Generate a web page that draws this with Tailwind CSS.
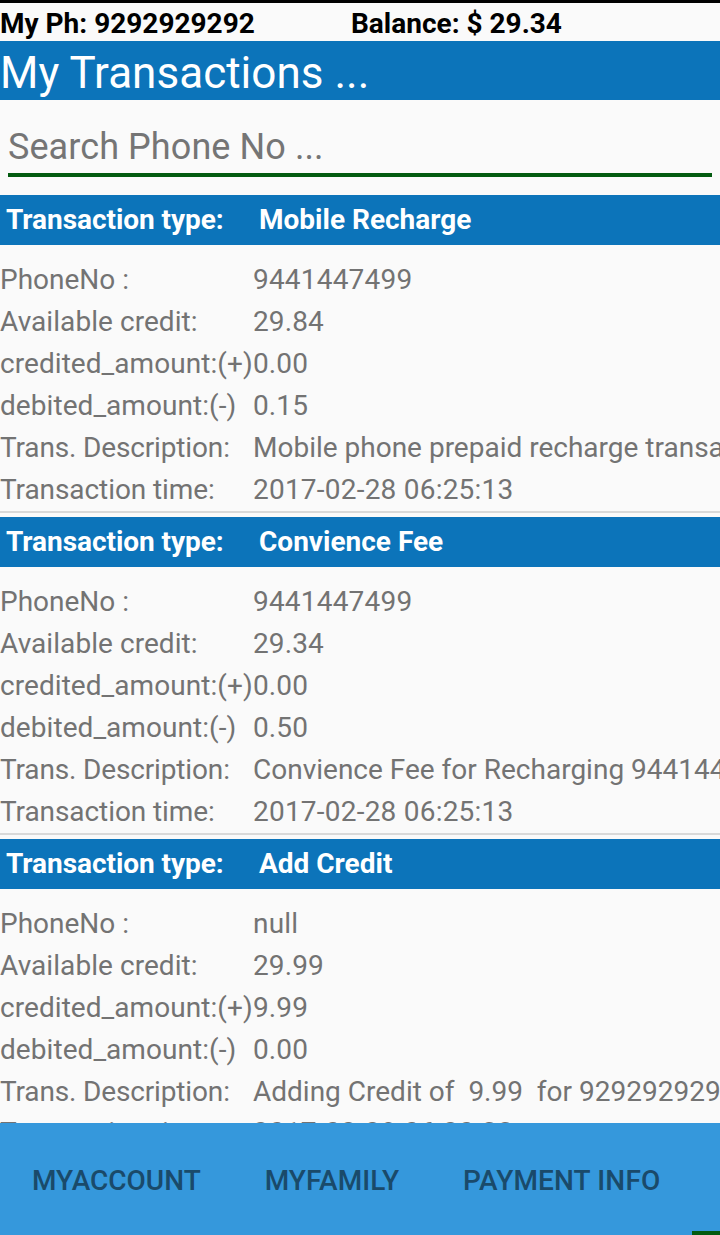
<!DOCTYPE html>
<html lang="en">
<head>
  <meta charset="UTF-8">
  <title>My Transactions</title>
  <script src="https://cdn.jsdelivr.net/npm/@tailwindcss/browser@4"></script>
</head>
<body class="bg-[#fafafa] font-['Roboto',sans-serif]">
  <div class="flex h-[1235px] w-[720px] flex-col overflow-hidden">

    <!-- Account bar -->
    <div class="flex h-[41px] shrink-0 border-t-3 border-black pt-0.5 text-[28px] leading-[38px] font-bold text-black">
      <div class="w-[351px]">My Ph: 9292929292</div>
      <div>Balance: $ 29.34</div>
    </div>
    <h1 class="h-[59px] shrink-0 bg-[#0c74ba] pt-[3px] text-[44px] leading-[58px] tracking-[0.03px] text-white">My Transactions ...</h1>

    <!-- Search -->
    <div class="h-[95px] shrink-0 px-2 pt-[22px]">
      <input type="text" placeholder="Search Phone No ..." class="block h-[55px] w-full border-b-4 border-[#035b10] pb-px text-[36px] tracking-[0.08px] text-[#757575] outline-none placeholder:text-[#757575]">
    </div>

    <!-- Transaction list -->
    <div id="list" class="min-h-0 flex-1 overflow-hidden"></div>

    <!-- Bottom tabs -->
    <nav class="flex h-28 shrink-0 flex-col bg-[#3598dc] text-[28px] font-medium text-[#1a4a6a]">
      <div class="flex flex-1 items-center gap-16 pt-2 pl-8">
        <a>MYACCOUNT</a>
        <a class="tracking-[0.05px]">MYFAMILY</a>
        <a class="tracking-[0.15px]">PAYMENT INFO</a>
      </div>
      <div class="h-1 w-7 self-end bg-[#035b10]"></div>
    </nav>
  </div>

  <script>
    const transactions = [
      ['Mobile Recharge', '9441447499', '29.84', '0.00', '0.15', 'Mobile phone prepaid recharge transaction', '2017-02-28 06:25:13'],
      ['Convience Fee', '9441447499', '29.34', '0.00', '0.50', 'Convience Fee for Recharging 9441447499', '2017-02-28 06:25:13'],
      ['Add Credit', 'null', '29.99', '9.99', '0.00', 'Adding Credit of  9.99  for 9292929292', '2017-02-28 06:20:33'],
    ];
    // label, label spacing, value spacing
    const fields = [
      ['PhoneNo :', '', 'tracking-[0.2px]'],
      ['Available credit:', 'tracking-[0.06px]', 'tracking-[0.1px]'],
      ['credited_amount:(+)', 'tracking-[0.06px]', 'tracking-[0.1px]'],
      ['debited_amount:(-)', 'tracking-[0.06px]', 'tracking-[0.1px]'],
      ['Trans. Description:', 'tracking-[-0.15px]', ''],
      ['Transaction time:', 'tracking-[-0.08px]', 'tracking-[0.22px]'],
    ];

    document.getElementById('list').innerHTML = transactions.map(([type, ...values]) => `
      <section class="group h-[322px]">
        <div class="flex h-[50px] bg-[#0c74ba] pl-1.5 text-[28px] leading-[50px] font-bold text-white">
          <div class="w-[253px] tracking-[-0.05px]">Transaction type:</div>
          <div>${type}</div>
        </div>
        <div class="h-[268px] border-b-2 border-[#d9d9d9] pt-3.5 text-[28px] leading-[42px] text-[#737373]">
          ${fields.map(([label, labelSpacing, valueSpacing], i) => `
            <div class="flex whitespace-pre group-last:last:leading-[40px]"><div class="w-[253px] shrink-0 ${labelSpacing}">${label}</div><div class="${valueSpacing}">${values[i]}</div></div>`).join('')}
        </div>
      </section>`).join('');
  </script>
</body>
</html>
